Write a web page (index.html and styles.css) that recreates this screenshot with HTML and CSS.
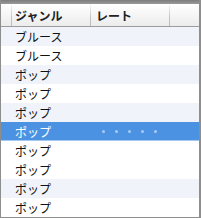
FILE: index.html
```html
<!DOCTYPE html>
<html lang="ja">
<head>
<meta charset="utf-8">
<link rel="stylesheet" href="styles.css">
</head>
<body>
<div class="table">
  <div class="topbar"></div>
  <div class="header">
    <div class="cell c0"></div>
    <div class="cell c1">ジャンル</div>
    <div class="cell c2">レート</div>
    <div class="cell c3"></div>
  </div>
  <div class="rows">
    <div class="row alt"><div class="cell c0"></div><div class="cell c1">ブルース</div><div class="cell c2"></div></div>
    <div class="row"><div class="cell c0"></div><div class="cell c1">ブルース</div><div class="cell c2"></div></div>
    <div class="row alt"><div class="cell c0"></div><div class="cell c1">ポップ</div><div class="cell c2"></div></div>
    <div class="row"><div class="cell c0"></div><div class="cell c1">ポップ</div><div class="cell c2"></div></div>
    <div class="row alt"><div class="cell c0"></div><div class="cell c1">ポップ</div><div class="cell c2"></div></div>
    <div class="row selected"><div class="cell c0"></div><div class="cell c1">ポップ</div><div class="cell c2 dots"><span></span><span></span><span></span><span></span><span></span></div></div>
    <div class="row"><div class="cell c0"></div><div class="cell c1">ポップ</div><div class="cell c2"></div></div>
    <div class="row"><div class="cell c0"></div><div class="cell c1">ポップ</div><div class="cell c2"></div></div>
    <div class="row alt"><div class="cell c0"></div><div class="cell c1">ポップ</div><div class="cell c2"></div></div>
    <div class="row"><div class="cell c0"></div><div class="cell c1">ポップ</div><div class="cell c2"></div></div>
  </div>
</div>
</body>
</html>
```
FILE: styles.css
```css
html, body {
  margin: 0;
  padding: 0;
  background: #ffffff;
}
.table {
  width: 201px;
  height: 218px;
  box-sizing: border-box;
  border-left: 1px solid #8e8e8e;
  border-right: 2px solid #8e8e8e;
  border-bottom: 1px solid #8e8e8e;
  overflow: hidden;
  font-family: "Noto Sans CJK JP", "Noto Sans", sans-serif;
  font-size: 12px;
  color: #111;
}
.topbar {
  height: 4px;
  background: linear-gradient(#7c7c7c, #9a9a9a);
}
.header {
  display: flex;
  height: 22px;
  border-bottom: 1px solid #9c9c9c;
  background: linear-gradient(#ffffff, #ececec);
  font-weight: bold;
  color: #222;
}
.header .cell {
  display: flex;
  align-items: center;
  border-right: 1px solid transparent;
  border-image: linear-gradient(rgba(200,200,200,0), #c4c4c4 60%, #b8b8b8) 1;
}
.header .c3 {
  border-right: none;
  flex: 1;
}
.cell {
  box-sizing: border-box;
  white-space: nowrap;
}
.c0 { width: 11px; }
.c1 { width: 79px; padding-left: 3px; }
.c2 { width: 79px; padding-left: 5px; }
.row {
  display: flex;
  height: 19px;
  align-items: center;
  line-height: 19px;
}
.row .c1 { padding-left: 3px; }
.row.alt { background: #f0f4fa; }
.row.selected {
  background: #4b93e2;
  color: #ffffff;
  box-shadow: inset 0 -1px 0 #a6c8f0;
}
.dots {
  display: flex;
  gap: 10px;
  padding-left: 11px;
  align-items: center;
}
.dots span {
  width: 3px;
  height: 3px;
  border-radius: 50%;
  background: #a9cbf3;
}
```
